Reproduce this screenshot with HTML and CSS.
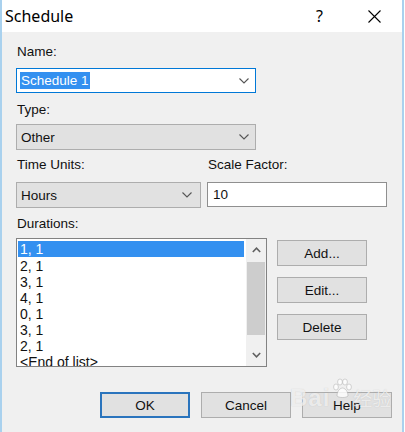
FILE: index.html
```html
<!DOCTYPE html>
<html>
<head>
<meta charset="utf-8">
<link rel="stylesheet" href="styles.css">
</head>
<body>
<div class="window">
  <div class="titlebar">
    <span class="title">Schedule</span>
    <span class="cap-btn help">?</span>
    <span class="cap-btn close"><svg width="13" height="13" viewBox="0 0 13 13"><path d="M0.5 0.5 L12.5 12.5 M12.5 0.5 L0.5 12.5" stroke="#000" stroke-width="1.1" fill="none"/></svg></span>
  </div>
  <div class="content">
    <div class="label">Name:</div>
    <div class="combo combo-edit name-combo">
      <span class="sel-text">Schedule 1</span>
      <svg class="chev" width="10" height="6" viewBox="0 0 10 6"><polyline points="0.5,0.5 5,5 9.5,0.5" fill="none" stroke="#555" stroke-width="1.1"/></svg>
    </div>

    <div class="label type-label">Type:</div>
    <div class="combo combo-list type-combo">
      <span>Other</span>
      <svg class="chev" width="10" height="6" viewBox="0 0 10 6"><polyline points="0.5,0.5 5,5 9.5,0.5" fill="none" stroke="#555" stroke-width="1.1"/></svg>
    </div>

    <div class="time-row">
      <div class="col units-col">
        <div class="label">Time Units:</div>
        <div class="combo combo-list units-combo">
          <span>Hours</span>
          <svg class="chev" width="10" height="6" viewBox="0 0 10 6"><polyline points="0.5,0.5 5,5 9.5,0.5" fill="none" stroke="#555" stroke-width="1.1"/></svg>
        </div>
      </div>
      <div class="col scale-col">
        <div class="label">Scale Factor:</div>
        <div class="textbox">10</div>
      </div>
    </div>

    <div class="label dur-label">Durations:</div>
    <div class="list-row">
      <div class="listbox">
        <div class="items">
          <div class="item selected">1, 1</div>
          <div class="item">2, 1</div>
          <div class="item">3, 1</div>
          <div class="item">4, 1</div>
          <div class="item">0, 1</div>
          <div class="item">3, 1</div>
          <div class="item">2, 1</div>
          <div class="item">&lt;End of list&gt;</div>
        </div>
        <div class="scrollbar">
          <div class="sb-btn"><svg width="9" height="6" viewBox="0 0 9 6"><polyline points="0.8,5 4.5,1.2 8.2,5" fill="none" stroke="#606060" stroke-width="1.6"/></svg></div>
          <div class="sb-thumb"></div>
          <div class="sb-track"></div>
          <div class="sb-btn"><svg width="9" height="6" viewBox="0 0 9 6"><polyline points="0.8,1 4.5,4.8 8.2,1" fill="none" stroke="#606060" stroke-width="1.6"/></svg></div>
        </div>
      </div>
      <div class="side-buttons">
        <div class="btn">Add...</div>
        <div class="btn">Edit...</div>
        <div class="btn">Delete</div>
      </div>
    </div>

    <div class="bottom-row">
      <div class="btn default">OK</div>
      <div class="btn">Cancel</div>
      <div class="btn">Help</div>
    </div>
  </div>
  <div class="watermark">
    <span class="wm-bai">Bai</span>
    <svg class="wm-paw" width="22" height="22" viewBox="0 0 22 22"><g fill="rgba(255,255,255,0.8)" stroke="rgba(140,140,140,0.45)" stroke-width="0.8"><ellipse cx="5" cy="9" rx="2.4" ry="3"/><ellipse cx="9" cy="4" rx="2.4" ry="3"/><ellipse cx="14" cy="4" rx="2.4" ry="3"/><ellipse cx="18" cy="9" rx="2.4" ry="3"/><path d="M6 18 C6 12 10 10 11.5 10 C13 10 17 12 17 18 C15 20 8 20 6 18 Z"/></g></svg>
    <span class="wm-cn">经验</span>
  </div>
</div>
</body>
</html>
```
FILE: styles.css
```css
html, body {
  margin: 0;
  padding: 0;
  background: #ffffff;
}
.window {
  position: relative;
  width: 400px;
  height: 432px;
  border-left: 2px solid #a9d1ee;
  border-right: 2px solid #a9d1ee;
  display: flex;
  flex-direction: column;
  font-family: "Liberation Sans", Arial, sans-serif;
  font-size: 13.5px;
  color: #111;
  overflow: hidden;
}
.titlebar {
  height: 32px;
  background: #ffffff;
  display: flex;
  align-items: center;
  flex: none;
  color: #000;
}
.title {
  font-family: "Noto Sans", "Liberation Sans", sans-serif;
  font-size: 16px;
  padding-left: 3px;
  flex: 1;
  line-height: 32px;
}
.cap-btn {
  width: 55px;
  height: 32px;
  display: flex;
  align-items: center;
  justify-content: center;
}
.help {
  font-family: "Noto Sans", "Liberation Sans", sans-serif;
  font-size: 16px;
}
.content {
  flex: 1;
  background: #f0f0f0;
  padding: 12px 10px 0 14px;
  display: flex;
  flex-direction: column;
}
.label {
  height: 16px;
  line-height: 16px;
  padding-left: 1px;
  white-space: nowrap;
}
.combo {
  box-sizing: border-box;
  display: flex;
  align-items: center;
  justify-content: space-between;
  padding: 0 6px 0 3px;
}
.combo-edit {
  background: #ffffff;
  border: 1px solid #0078d7;
}
.combo-list {
  background: #e1e1e1;
  border: 1px solid #adadad;
  padding-left: 4px;
}
.name-combo {
  width: 240px;
  height: 25px;
  margin-top: 8px;
}
.sel-text {
  background: #3390f0;
  color: #ffffff;
  line-height: 17px;
  padding: 0 1px;
}
.type-label {
  margin-top: 9px;
}
.type-combo {
  width: 240px;
  height: 26px;
  margin-top: 6px;
}
.time-row {
  display: flex;
  gap: 6px;
  margin-top: 7px;
}
.col {
  display: flex;
  flex-direction: column;
}
.units-combo {
  width: 185px;
  height: 26px;
  margin-top: 9px;
  padding-right: 8px;
}
.textbox {
  box-sizing: border-box;
  width: 180px;
  height: 25px;
  margin-top: 9px;
  background: #ffffff;
  border: 1px solid #8f8f8f;
  padding-left: 5px;
  display: flex;
  align-items: center;
}
.dur-label {
  margin-top: 8px;
}
.list-row {
  display: flex;
  align-items: flex-start;
  margin-top: 6px;
}
.listbox {
  box-sizing: border-box;
  width: 251px;
  height: 129px;
  border: 1px solid #828282;
  background: #ffffff;
  display: flex;
  overflow: hidden;
}
.items {
  flex: 1;
  padding: 2px 2px 0 1px;
  overflow: hidden;
}
.item {
  height: 16px;
  line-height: 18px;
  padding-left: 2px;
  font-size: 14px;
  white-space: nowrap;
  overflow: hidden;
}
.item.selected {
  background: #3390f0;
  color: #ffffff;
  line-height: 17px;
}
.scrollbar {
  width: 20px;
  background: #f0f0f0;
  display: flex;
  flex-direction: column;
}
.sb-btn {
  height: 22px;
  display: flex;
  align-items: center;
  justify-content: center;
  flex: none;
}
.sb-thumb {
  height: 73px;
  margin: 1px 1px 0 1px;
  background: #cdcdcd;
  flex: none;
}
.sb-track {
  flex: 1;
}
.side-buttons {
  display: flex;
  flex-direction: column;
  gap: 11px;
  margin-left: 10px;
  margin-top: 2px;
}
.btn {
  box-sizing: border-box;
  width: 90px;
  height: 26px;
  background: #e1e1e1;
  border: 1px solid #adadad;
  display: flex;
  align-items: center;
  justify-content: center;
}
.btn.default {
  border: 2px solid #2a74bd;
}
.bottom-row {
  display: flex;
  justify-content: flex-end;
  gap: 11px;
  margin-top: 25px;
}
.watermark {
  position: absolute;
  left: 288px;
  top: 378px;
  display: flex;
  align-items: flex-start;
  color: rgba(255, 255, 255, 0.7);
  text-shadow: 0 0 1px rgba(120, 120, 120, 0.35);
  font-family: "Liberation Sans", sans-serif;
  pointer-events: none;
}
.wm-bai {
  font-size: 24px;
  font-weight: bold;
  letter-spacing: 1px;
  margin-top: 6px;
}
.wm-paw {
  margin-left: 1px;
}
.wm-cn {
  font-family: "Noto Sans CJK SC", sans-serif;
  font-size: 19px;
  margin-top: 6px;
}
```
